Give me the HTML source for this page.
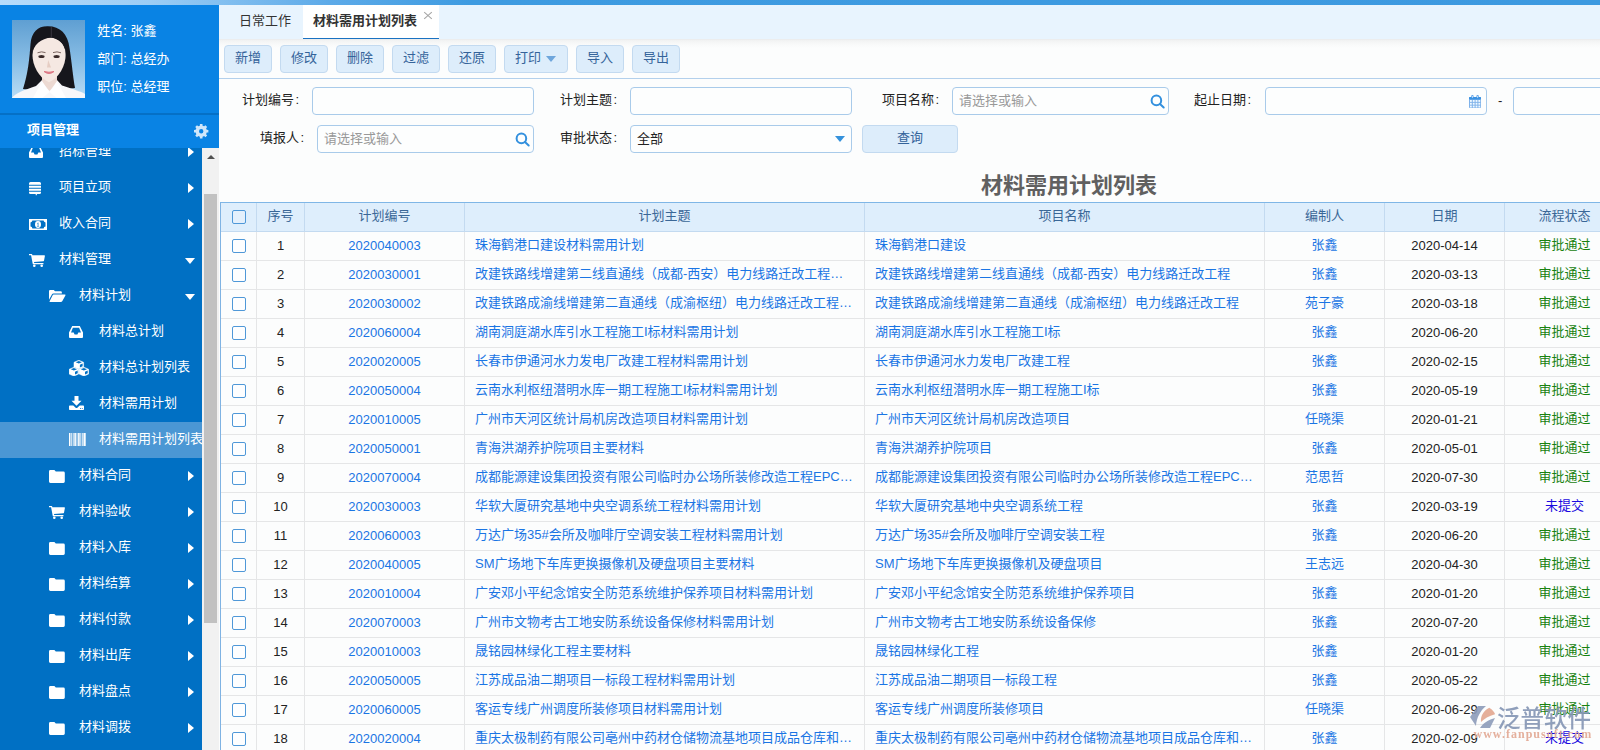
<!DOCTYPE html>
<html lang="zh-CN">
<head>
<meta charset="utf-8">
<title>材料需用计划列表</title>
<style>
*{box-sizing:border-box;margin:0;padding:0}
html,body{width:1600px;height:750px;overflow:hidden;background:#fcfdfd}
body{position:relative;font-family:"Liberation Sans","Noto Sans CJK SC",sans-serif;font-size:13px;color:#333;line-height:1}
.abs{position:absolute}
/* top strip */
#strip{position:absolute;left:0;top:0;width:1600px;height:5px;background:linear-gradient(90deg,#b7dcfb 0,#9ccdf5 150px,#5daae8 330px,#3e9be1 470px,#3c99e0 100%)}
/* sidebar */
#side{position:absolute;left:0;top:5px;width:219px;height:745px;background:#0983e4;overflow:hidden}
#side .info{position:absolute;left:97.300px;color:#fff;font-size:13px;line-height:16px;white-space:nowrap}
#divider{position:absolute;left:0;top:108px;width:219px;height:2px;background:#0570c6}
#modname{position:absolute;left:27px;top:117px;color:#fff;font-weight:bold;font-size:13px;line-height:16px}
#menu{position:absolute;left:0;top:143px;width:202px;height:602px;background:#0070c4;overflow:hidden}
#menu .it{position:absolute;left:0;width:202px;height:36px;color:#fff;font-size:13px;line-height:36px;white-space:nowrap}
#menu .it.on{background:#4b97d4}
#menu .it span{position:absolute;top:-1px}
#menu .it svg{position:absolute}
#sbar{position:absolute;left:202px;top:143px;width:17px;height:602px;background:#f1f1f1}
#sbar .thumb{position:absolute;left:2px;top:46px;width:13px;height:429px;background:#c1c1c1}
#sbar .up{position:absolute;left:5px;top:7px;width:0;height:0;border-left:4px solid transparent;border-right:4px solid transparent;border-bottom:4px solid #505050}
/* main */
#main{position:absolute;left:219px;top:5px;width:1381px;height:745px;overflow:hidden;background:#fcfdfd}
#tabs{position:absolute;left:0;top:0;width:1381px;height:34px;background:#e8f4fe}
#tabshadow{position:absolute;left:0;top:34px;width:1381px;height:9px;background:linear-gradient(180deg,#e9eaeb 0,#f1f2f2 14%,#f5f6f6 35%,#f9fafa 65%,#fcfdfd 100%)}
.tab{position:absolute;top:0;height:34px;line-height:32px;font-size:13px;color:#333;white-space:nowrap}
.tab.on{background:#fff;border-bottom:1px solid #1a72c2;font-weight:bold;color:#333}
.btn{position:absolute;top:40px;height:28px;border:1px solid #c3daf0;border-radius:4px;background:#ddedfb;color:#34639a;font-size:13px;line-height:24px;text-align:center;white-space:nowrap}
#tbline{position:absolute;left:0;top:73px;width:1381px;height:1px;background:#b3d0ec}
.lbl{position:absolute;font-size:13px;line-height:16px;color:#222;white-space:nowrap}
.lbl i{font-style:normal;margin-left:1.500px}
.inp{position:absolute;height:28px;border:1px solid #a9cbea;border-radius:4px;background:#fdfefe}
.ph{position:absolute;left:6px;top:5px;font-size:13px;line-height:16px;color:#999;white-space:nowrap}

#grid{position:absolute;left:1px;top:197px;width:1700px;height:560px;border-left:1px solid #7fb3e3}
.gh,.gr{position:absolute;left:0;width:1700px;height:29px}
.gh{top:0;height:30px;background:#deeefc;border-top:1px solid #7fb6e6;border-bottom:1px solid #c3daf0;color:#3a6797}
.gr{border-bottom:1px solid #e5e6e7;background:#fcfdfd;color:#222}
.c{position:absolute;top:0;height:100%;line-height:28px;text-align:center;white-space:nowrap;overflow:hidden;border-right:1px solid #e5e6e7;font-size:13px}
.gh .c{border-right:1px solid #c3daf0}
.c0{left:0;width:36px}.c1{left:36px;width:48px}.c2{left:84px;width:160px}.c3{left:244px;width:400px}.c4{left:644px;width:400px}.c5{left:1044px;width:120px}.c6{left:1164px;width:120px}.c7{left:1284px;width:120px}
.gr .c3,.gr .c4,.gr .c5,.gr .c7{line-height:26px}
.gh .c{line-height:25px}
.c.l{text-align:left;padding-left:10px}
.lk{color:#1a75e4}
.ok{color:#188210}.no{color:#1a0ae0}
.cb{position:absolute;left:11px;top:7px;width:14px;height:14px;border:1px solid #4f98d8;border-radius:2px;background:#fdfeff}
.gh .cb{background:#e4f0fc;top:7px}
#wm{position:absolute;left:1251px;top:700px;width:125px;height:45px;opacity:.9}
</style>
</head>
<body>
<div id="strip"></div>
<div id="side">
  <svg class="abs" style="left:12px;top:15px" width="73" height="78" viewBox="0 0 73 78">
<defs><linearGradient id="avbg" x1="0" y1="0" x2="0" y2="1"><stop offset="0" stop-color="#5f9fd2"/><stop offset=".55" stop-color="#8bbfe6"/><stop offset="1" stop-color="#b9dcf5"/></linearGradient>
<filter id="avbl" x="-10%" y="-10%" width="120%" height="120%"><feGaussianBlur stdDeviation=".75"/></filter>
<clipPath id="avcl"><rect width="73" height="78"/></clipPath></defs>
<rect width="73" height="78" fill="url(#avbg)"/>
<g clip-path="url(#avcl)" filter="url(#avbl)">
<path fill="#16151b" d="M36 6.300C26 6 19.500 12 18.500 24C17.500 38 16 54 11 69L34 72L63 68C61 57 60 44 57.500 28C56 14 48 6.300 36 6.300Z"/>
<path fill="#f7f7fa" d="M0 78C3 73.500 12 70 24 66L30 60H45L50 65.500C61 69 69 71.500 73 74V78Z"/>
<path fill="#ecd9d2" d="M30 52H45V63L37.500 71L30 63Z"/>
<path fill="#f5e8e2" d="M37.500 17.500C47 17.500 53.700 24 53.700 34C53.700 46 47 58 37 62.300C27 58 20.400 46 20.400 34C20.400 24 28 17.500 37.500 17.500Z"/>
<path fill="#16151b" d="M20 36C19.500 26 24 19 31 17L37 12L45 17C51 20 54.500 27 54 36C53.600 26 49.500 19.500 39.500 17.400C29 18.500 21 24 20 36Z"/>
<path d="M39.300 7V17" stroke="#4a4450" stroke-width=".7"/>
<path fill="#fefeff" d="M30 61L37.500 72L30.500 78H21Z M45 61L37.500 72L44.500 78H54Z"/>
<path d="M25.500 32.800Q29.500 31 33.500 32.600M41 32.600Q45 31 49 32.800" stroke="#7a6560" stroke-width="1" fill="none"/>
<ellipse cx="29.500" cy="36.600" rx="3.100" ry="1.500" fill="#3a2c2a"/><ellipse cx="44.600" cy="36.600" rx="3.100" ry="1.500" fill="#3a2c2a"/>
<path d="M36.200 40 35 47.500H39Z" fill="#e6cdc3"/>
<path d="M32 51.500Q37 55.500 42 51.500Q37 53 32 51.500Z" fill="#dc7784" stroke="#dc7784" stroke-width="1"/>
</g></svg>
  <div class="info" style="top:18px">姓名: 张鑫</div>
  <div class="info" style="top:46px">部门: 总经办</div>
  <div class="info" style="top:74px">职位: 总经理</div>
  <div id="divider"></div>
  <div id="modname">项目管理</div>
  <svg class="abs" style="left:194px;top:119px" width="15" height="15" viewBox="0 0 15 15"><path fill="#cfe6fa" fill-rule="evenodd" d="M12.73 5.83L14.39 5.94L14.39 8.46L12.73 8.57L12.08 10.14L13.17 11.40L11.40 13.17L10.14 12.08L8.57 12.73L8.46 14.39L5.94 14.39L5.83 12.73L4.26 12.08L3.00 13.17L1.23 11.40L2.32 10.14L1.67 8.57L0.01 8.46L0.01 5.94L1.67 5.83L2.32 4.26L1.23 3.00L3.00 1.23L4.26 2.32L5.83 1.67L5.94 0.01L8.46 0.01L8.57 1.67L10.14 2.32L11.40 1.23L13.17 3.00L12.08 4.26ZM5.00 7.20a2.20 2.20 0 1 0 4.40 0a2.20 2.20 0 1 0 -4.40 0Z"/></svg>
  <div id="menu">
  <div class="it" style="top:-14px"><svg style="left:29px;top:12px" width="14" height="12" viewBox="0 0 14 12" preserveAspectRatio="none"><path fill="#fff" fill-rule="evenodd" d="M3.2 0h7.6L14 6.6V11a1 1 0 0 1-1 1H1a1 1 0 0 1-1-1V6.6Z M3.9 1.7 2 6.6h2.7l.9 1.8h2.8l.9-1.8H12L10.1 1.7Z"/></svg><span style="left:59px">招标管理</span><svg style="left:188px;top:13px" width="6" height="10" viewBox="0 0 6 10" preserveAspectRatio="none"><path fill="#fff" d="M0 0 6 5 0 10Z"/></svg></div>
<div class="it" style="top:22px"><svg style="left:29px;top:12px" width="12" height="14" viewBox="0 0 12 14" preserveAspectRatio="none"><path fill="#fff" d="M1.5 0h9A1.5 1.5 0 0 1 12 1.5v1.3H0V1.5A1.5 1.5 0 0 1 1.5 0ZM0 3.8h12v2H0ZM0 6.8h12v2H0ZM0 9.8h12v.7A1.5 1.5 0 0 1 10.500 12H8.200L7 13.800 6.600 12H1.500A1.500 1.500 0 0 1 0 10.500Z"/></svg><span style="left:59px">项目立项</span><svg style="left:188px;top:13px" width="6" height="10" viewBox="0 0 6 10" preserveAspectRatio="none"><path fill="#fff" d="M0 0 6 5 0 10Z"/></svg></div>
<div class="it" style="top:58px"><svg style="left:29px;top:12.5px" width="18" height="11" viewBox="0 0 18 11" preserveAspectRatio="none"><path fill="#fff" fill-rule="evenodd" d="M0 0h18v11H0Z M3.400 1.500A2.200 2.200 0 0 1 1.500 3.400V7.600A2.200 2.200 0 0 1 3.400 9.500H14.600A2.200 2.200 0 0 1 16.500 7.600V3.400A2.200 2.200 0 0 1 14.600 1.500Z"/><ellipse cx="9" cy="5.500" rx="3" ry="3.400" fill="#fff"/><path d="M8.300 4.100 9.400 3.600V7H10.100V7.500H7.900V7H8.700V4.500L8.300 4.700Z" fill="#0070c4"/></svg><span style="left:59px">收入合同</span><svg style="left:188px;top:13px" width="6" height="10" viewBox="0 0 6 10" preserveAspectRatio="none"><path fill="#fff" d="M0 0 6 5 0 10Z"/></svg></div>
<div class="it" style="top:94px"><svg style="left:29px;top:12px" width="16" height="13" viewBox="0 0 16 13" preserveAspectRatio="none"><path fill="#fff" d="M0 0h2.600a.6.600 0 0 1 .6.500L3.400 1.300H15.300a.6.600 0 0 1 .6.700L15 6.700a.6.600 0 0 1-.5.500L5 8.100l.2 1H14a.6.600 0 0 1 0 1.200H4.300a.6.600 0 0 1-.6-.5L2.100 1.200H0Z"/><circle cx="5.300" cy="11.700" r="1.300" fill="#fff"/><circle cx="12.700" cy="11.700" r="1.300" fill="#fff"/></svg><span style="left:59px">材料管理</span><svg style="left:185px;top:16px" width="10" height="6" viewBox="0 0 10 6" preserveAspectRatio="none"><path fill="#fff" d="M0 0H10L5 6Z"/></svg></div>
<div class="it" style="top:130px"><svg style="left:49px;top:12px" width="16.6" height="12" viewBox="0 0 16 12" preserveAspectRatio="none"><path fill="#fff" d="M1.100 0H4.600L5.800 1.300H11.300A1.100 1.100 0 0 1 12.400 2.400V3.500H4.400A1.800 1.800 0 0 0 2.800 4.500L0 9.700V1.100A1.100 1.100 0 0 1 1.100 0Z"/><path fill="#fff" d="M4.500 4.600H15.300A.6.600 0 0 1 15.800 5.500L12.900 11A1.800 1.800 0 0 1 11.300 12H1A.5.500 0 0 1 .6 11.200L3.400 5.400A1.300 1.300 0 0 1 4.500 4.600Z"/></svg><span style="left:79px">材料计划</span><svg style="left:185px;top:16px" width="10" height="6" viewBox="0 0 10 6" preserveAspectRatio="none"><path fill="#fff" d="M0 0H10L5 6Z"/></svg></div>
<div class="it" style="top:166px"><svg style="left:69px;top:12px" width="14" height="12" viewBox="0 0 14 12" preserveAspectRatio="none"><path fill="#fff" fill-rule="evenodd" d="M3.2 0h7.6L14 6.6V11a1 1 0 0 1-1 1H1a1 1 0 0 1-1-1V6.6Z M3.9 1.7 2 6.6h2.7l.9 1.8h2.8l.9-1.8H12L10.1 1.7Z"/></svg><span style="left:99px">材料总计划</span></div>
<div class="it" style="top:202px"><svg style="left:69px;top:10px" width="20" height="16" viewBox="0 0 20 16" preserveAspectRatio="none"><path fill="#fff" stroke="#fff" stroke-width=".5" stroke-linejoin="round" d="M9.8 0.2l4.8 2.100v4.700l-4.8 2.100l-4.8-2.100v-4.700Z"/><path fill="#0070c4" d="M9.8 1.1l3.100 1.250l-3.100 1.250l-3.100-1.250Z"/><path fill="#0070c4" d="M10.9 4.8l2.700-1.200v2.700l-2.700 1.200Z"/><path fill="#fff" stroke="#fff" stroke-width=".5" stroke-linejoin="round" d="M4.9 7.2l4.8 2.100v4.700l-4.8 2.100l-4.8-2.100v-4.700Z"/><path fill="#0070c4" d="M4.9 8.1l3.100 1.250l-3.100 1.250l-3.100-1.250Z"/><path fill="#0070c4" d="M6.0 11.8l2.700-1.200v2.700l-2.700 1.200Z"/><path fill="#fff" stroke="#fff" stroke-width=".5" stroke-linejoin="round" d="M14.9 7.2l4.8 2.100v4.700l-4.8 2.100l-4.8-2.100v-4.700Z"/><path fill="#0070c4" d="M14.9 8.1l3.100 1.250l-3.100 1.250l-3.100-1.250Z"/><path fill="#0070c4" d="M16.0 11.8l2.700-1.200v2.700l-2.700 1.200Z"/></svg><span style="left:99px">材料总计划列表</span></div>
<div class="it" style="top:238px"><svg style="left:69px;top:10px" width="15" height="14" viewBox="0 0 15 14" preserveAspectRatio="none"><path fill="#fff" d="M5.500 0h4v4.800h3L7.500 9.800 2.500 4.800h3Z"/><path fill="#fff" fill-rule="evenodd" d="M.8 9.500H4.300L6.400 11.600A1.600 1.600 0 0 0 8.600 11.600L10.700 9.500H14.200A.8.800 0 0 1 15 10.300V13.200A.8.800 0 0 1 14.200 14H.8A.8.800 0 0 1 0 13.200V10.300A.8.800 0 0 1 .8 9.500ZM11 12.300h1v.8h-1ZM12.800 12.300h1v.8h-1Z"/></svg><span style="left:99px">材料需用计划</span></div>
<div class="it on" style="top:274px"><svg style="left:69px;top:11px" width="17" height="13" viewBox="0 0 17 13" preserveAspectRatio="none"><rect x="0" y="0" width="1.5" height="13" fill="#fff"/><rect x="2.3" y="0" width="0.8" height="13" fill="#fff"/><rect x="3.8" y="0" width="0.8" height="13" fill="#fff"/><rect x="5.3" y="0" width="1.6" height="13" fill="#fff"/><rect x="7.6" y="0" width="0.8" height="13" fill="#fff"/><rect x="9.1" y="0" width="1.6" height="13" fill="#fff"/><rect x="11.4" y="0" width="0.8" height="13" fill="#fff"/><rect x="12.9" y="0" width="0.8" height="13" fill="#fff"/><rect x="14.4" y="0" width="1.6" height="13" fill="#fff"/><rect x="16.3" y="0" width="0.7" height="13" fill="#fff"/></svg><span style="left:99px">材料需用计划列表</span></div>
<div class="it" style="top:310px"><svg style="left:49px;top:11.5px" width="16" height="13" viewBox="0 0 16 13" preserveAspectRatio="none"><path fill="#fff" d="M1.400 0H5.400L6.800 1.600H14.400A1.400 1.400 0 0 1 15.800 3V11.600A1.400 1.400 0 0 1 14.400 13H1.400A1.400 1.400 0 0 1 0 11.600V1.400A1.400 1.400 0 0 1 1.400 0Z"/></svg><span style="left:79px">材料合同</span><svg style="left:188px;top:13px" width="6" height="10" viewBox="0 0 6 10" preserveAspectRatio="none"><path fill="#fff" d="M0 0 6 5 0 10Z"/></svg></div>
<div class="it" style="top:346px"><svg style="left:49px;top:12px" width="16" height="13" viewBox="0 0 16 13" preserveAspectRatio="none"><path fill="#fff" d="M0 0h2.600a.6.600 0 0 1 .6.500L3.400 1.300H15.300a.6.600 0 0 1 .6.700L15 6.700a.6.600 0 0 1-.5.500L5 8.100l.2 1H14a.6.600 0 0 1 0 1.200H4.300a.6.600 0 0 1-.6-.5L2.100 1.200H0Z"/><circle cx="5.300" cy="11.700" r="1.300" fill="#fff"/><circle cx="12.700" cy="11.700" r="1.300" fill="#fff"/></svg><span style="left:79px">材料验收</span><svg style="left:188px;top:13px" width="6" height="10" viewBox="0 0 6 10" preserveAspectRatio="none"><path fill="#fff" d="M0 0 6 5 0 10Z"/></svg></div>
<div class="it" style="top:382px"><svg style="left:49px;top:11.5px" width="16" height="13" viewBox="0 0 16 13" preserveAspectRatio="none"><path fill="#fff" d="M1.400 0H5.400L6.800 1.600H14.400A1.400 1.400 0 0 1 15.800 3V11.600A1.400 1.400 0 0 1 14.400 13H1.400A1.400 1.400 0 0 1 0 11.600V1.400A1.400 1.400 0 0 1 1.400 0Z"/></svg><span style="left:79px">材料入库</span><svg style="left:188px;top:13px" width="6" height="10" viewBox="0 0 6 10" preserveAspectRatio="none"><path fill="#fff" d="M0 0 6 5 0 10Z"/></svg></div>
<div class="it" style="top:418px"><svg style="left:49px;top:11.5px" width="16" height="13" viewBox="0 0 16 13" preserveAspectRatio="none"><path fill="#fff" d="M1.400 0H5.400L6.800 1.600H14.400A1.400 1.400 0 0 1 15.800 3V11.600A1.400 1.400 0 0 1 14.400 13H1.400A1.400 1.400 0 0 1 0 11.600V1.400A1.400 1.400 0 0 1 1.400 0Z"/></svg><span style="left:79px">材料结算</span><svg style="left:188px;top:13px" width="6" height="10" viewBox="0 0 6 10" preserveAspectRatio="none"><path fill="#fff" d="M0 0 6 5 0 10Z"/></svg></div>
<div class="it" style="top:454px"><svg style="left:49px;top:11.5px" width="16" height="13" viewBox="0 0 16 13" preserveAspectRatio="none"><path fill="#fff" d="M1.400 0H5.400L6.800 1.600H14.400A1.400 1.400 0 0 1 15.800 3V11.600A1.400 1.400 0 0 1 14.400 13H1.400A1.400 1.400 0 0 1 0 11.600V1.400A1.400 1.400 0 0 1 1.400 0Z"/></svg><span style="left:79px">材料付款</span><svg style="left:188px;top:13px" width="6" height="10" viewBox="0 0 6 10" preserveAspectRatio="none"><path fill="#fff" d="M0 0 6 5 0 10Z"/></svg></div>
<div class="it" style="top:490px"><svg style="left:49px;top:11.5px" width="16" height="13" viewBox="0 0 16 13" preserveAspectRatio="none"><path fill="#fff" d="M1.400 0H5.400L6.800 1.600H14.400A1.400 1.400 0 0 1 15.800 3V11.600A1.400 1.400 0 0 1 14.400 13H1.400A1.400 1.400 0 0 1 0 11.600V1.400A1.400 1.400 0 0 1 1.400 0Z"/></svg><span style="left:79px">材料出库</span><svg style="left:188px;top:13px" width="6" height="10" viewBox="0 0 6 10" preserveAspectRatio="none"><path fill="#fff" d="M0 0 6 5 0 10Z"/></svg></div>
<div class="it" style="top:526px"><svg style="left:49px;top:11.5px" width="16" height="13" viewBox="0 0 16 13" preserveAspectRatio="none"><path fill="#fff" d="M1.400 0H5.400L6.800 1.600H14.400A1.400 1.400 0 0 1 15.800 3V11.600A1.400 1.400 0 0 1 14.400 13H1.400A1.400 1.400 0 0 1 0 11.600V1.400A1.400 1.400 0 0 1 1.400 0Z"/></svg><span style="left:79px">材料盘点</span><svg style="left:188px;top:13px" width="6" height="10" viewBox="0 0 6 10" preserveAspectRatio="none"><path fill="#fff" d="M0 0 6 5 0 10Z"/></svg></div>
<div class="it" style="top:562px"><svg style="left:49px;top:11.5px" width="16" height="13" viewBox="0 0 16 13" preserveAspectRatio="none"><path fill="#fff" d="M1.400 0H5.400L6.800 1.600H14.400A1.400 1.400 0 0 1 15.800 3V11.600A1.400 1.400 0 0 1 14.400 13H1.400A1.400 1.400 0 0 1 0 11.600V1.400A1.400 1.400 0 0 1 1.400 0Z"/></svg><span style="left:79px">材料调拨</span><svg style="left:188px;top:13px" width="6" height="10" viewBox="0 0 6 10" preserveAspectRatio="none"><path fill="#fff" d="M0 0 6 5 0 10Z"/></svg></div>
  </div>
  <div id="sbar"><div class="up"></div><div class="thumb"></div></div>
</div>
<div id="main">
  <div id="tabs">
    <div class="tab" style="left:20px">日常工作</div>
    <div class="tab on" style="left:84px;width:136px;padding-left:10px">材料需用计划列表</div>
    <svg class="abs" style="left:204px;top:6px" width="10" height="9" viewBox="0 0 10 9"><path d="M1.200 1.200 8.800 7.800M8.800 1.200 1.200 7.800" stroke="#a6a6a6" stroke-width="1.100" fill="none"/></svg>
  </div>
  <div id="tabshadow"></div>
  <div class="btn" style="left:5px;width:48px">新增</div>
  <div class="btn" style="left:61px;width:48px">修改</div>
  <div class="btn" style="left:117px;width:48px">删除</div>
  <div class="btn" style="left:173px;width:48px">过滤</div>
  <div class="btn" style="left:229px;width:48px">还原</div>
  <div class="btn" style="left:285px;width:64px;text-align:left;padding-left:10px">打印<svg class="abs" style="left:41px;top:10px" width="10" height="6" viewBox="0 0 10 6"><path d="M0 0H10L5 6Z" fill="#6ea6dc"/></svg></div>
  <div class="btn" style="left:357px;width:48px">导入</div>
  <div class="btn" style="left:413px;width:48px">导出</div>
  <div id="tbline"></div>
  <div class="lbl" style="left:23px;top:87px">计划编号<i>:</i></div>
<div class="inp" style="left:93px;top:82px;width:222px"></div>
<div class="lbl" style="left:341px;top:87px">计划主题<i>:</i></div>
<div class="inp" style="left:411px;top:82px;width:222px"></div>
<div class="lbl" style="left:663px;top:87px">项目名称<i>:</i></div>
<div class="inp" style="left:733px;top:82px;width:217px"><div class="ph">请选择或输入</div><svg class="abs" style="left:197px;top:6px" width="16" height="16" viewBox="0 0 16 16"><circle cx="6.400" cy="6.400" r="4.800" fill="none" stroke="#3390de" stroke-width="2"/><path d="M10 10 13.700 13.500" stroke="#3390de" stroke-width="2" stroke-linecap="round"/></svg></div>
<div class="lbl" style="left:975px;top:87px">起止日期<i>:</i></div>
<div class="inp" style="left:1046px;top:82px;width:222px"><svg class="abs" style="left:203.3px;top:6.9px" width="12" height="13" viewBox="0 0 12 13"><rect x="0" y="2" width="12" height="11" rx=".8" fill="#7fb2ea"/><rect x="0" y="2" width="12" height="2.400" rx=".8" fill="#3a92e2"/><rect x="2.300" y="0" width="2.200" height="3.600" rx="1" fill="#4a97e4"/><rect x="7.500" y="0" width="2.200" height="3.600" rx="1" fill="#4a97e4"/><rect x="2.950" y=".8" width=".9" height="2" fill="#cfe6fb"/><rect x="8.150" y=".8" width=".9" height="2" fill="#cfe6fb"/><g fill="#f0f9ff"><rect x="1" y="5" width="1.800" height="1.900"/><rect x="3.8" y="5" width="1.800" height="1.900"/><rect x="6.6" y="5" width="1.800" height="1.900"/><rect x="9.4" y="5" width="1.800" height="1.900"/><rect x="1" y="7.8" width="1.800" height="1.900"/><rect x="3.8" y="7.8" width="1.800" height="1.900"/><rect x="6.6" y="7.8" width="1.800" height="1.900"/><rect x="9.4" y="7.8" width="1.800" height="1.900"/><rect x="1" y="10.6" width="1.800" height="1.900"/><rect x="3.8" y="10.6" width="1.800" height="1.900"/><rect x="6.6" y="10.6" width="1.800" height="1.900"/><rect x="9.4" y="10.6" width="1.800" height="1.900"/></g></svg></div>
<div class="lbl" style="left:1279px;top:88px">-</div>
<div class="inp" style="left:1294px;top:82px;width:222px"></div>
<div class="lbl" style="left:41px;top:125px">填报人<i>:</i></div>
<div class="inp" style="left:98px;top:120px;width:217px"><div class="ph">请选择或输入</div><svg class="abs" style="left:197px;top:6px" width="16" height="16" viewBox="0 0 16 16"><circle cx="6.400" cy="6.400" r="4.800" fill="none" stroke="#3390de" stroke-width="2"/><path d="M10 10 13.700 13.500" stroke="#3390de" stroke-width="2" stroke-linecap="round"/></svg></div>
<div class="lbl" style="left:341px;top:125px">审批状态<i>:</i></div>
<div class="inp" style="left:411px;top:120px;width:222px"><div class="ph" style="color:#222">全部</div><svg class="abs" style="left:204px;top:10px" width="10" height="6" viewBox="0 0 10 6"><path d="M0 0H10L5 6Z" fill="#3592dc"/></svg></div>
<div class="btn" style="left:643px;top:120px;width:96px;height:28px">查询</div>
<div class="abs" style="left:1px;top:167px;width:1698px;text-align:center;font-size:22px;line-height:28px;font-weight:bold;color:#606060">材料需用计划列表</div>
  <div id="grid">
<div class="gh"><div class="c c0"><i class="cb"></i></div><div class="c c1">序号</div><div class="c c2">计划编号</div><div class="c c3">计划主题</div><div class="c c4">项目名称</div><div class="c c5">编制人</div><div class="c c6">日期</div><div class="c c7">流程状态</div></div>
<div class="gr" style="top:30px"><div class="c c0"><i class="cb"></i></div><div class="c c1">1</div><div class="c c2 lk">2020040003</div><div class="c c3 lk l">珠海鹤港口建设材料需用计划</div><div class="c c4 lk l">珠海鹤港口建设</div><div class="c c5 lk">张鑫</div><div class="c c6">2020-04-14</div><div class="c c7"><span class="ok">审批通过</span></div></div>
<div class="gr" style="top:59px"><div class="c c0"><i class="cb"></i></div><div class="c c1">2</div><div class="c c2 lk">2020030001</div><div class="c c3 lk l">改建铁路线增建第二线直通线（成都-西安）电力线路迁改工程…</div><div class="c c4 lk l">改建铁路线增建第二线直通线（成都-西安）电力线路迁改工程</div><div class="c c5 lk">张鑫</div><div class="c c6">2020-03-13</div><div class="c c7"><span class="ok">审批通过</span></div></div>
<div class="gr" style="top:88px"><div class="c c0"><i class="cb"></i></div><div class="c c1">3</div><div class="c c2 lk">2020030002</div><div class="c c3 lk l">改建铁路成渝线增建第二直通线（成渝枢纽）电力线路迁改工程…</div><div class="c c4 lk l">改建铁路成渝线增建第二直通线（成渝枢纽）电力线路迁改工程</div><div class="c c5 lk">苑子豪</div><div class="c c6">2020-03-18</div><div class="c c7"><span class="ok">审批通过</span></div></div>
<div class="gr" style="top:117px"><div class="c c0"><i class="cb"></i></div><div class="c c1">4</div><div class="c c2 lk">2020060004</div><div class="c c3 lk l">湖南洞庭湖水库引水工程施工I标材料需用计划</div><div class="c c4 lk l">湖南洞庭湖水库引水工程施工I标</div><div class="c c5 lk">张鑫</div><div class="c c6">2020-06-20</div><div class="c c7"><span class="ok">审批通过</span></div></div>
<div class="gr" style="top:146px"><div class="c c0"><i class="cb"></i></div><div class="c c1">5</div><div class="c c2 lk">2020020005</div><div class="c c3 lk l">长春市伊通河水力发电厂改建工程材料需用计划</div><div class="c c4 lk l">长春市伊通河水力发电厂改建工程</div><div class="c c5 lk">张鑫</div><div class="c c6">2020-02-15</div><div class="c c7"><span class="ok">审批通过</span></div></div>
<div class="gr" style="top:175px"><div class="c c0"><i class="cb"></i></div><div class="c c1">6</div><div class="c c2 lk">2020050004</div><div class="c c3 lk l">云南水利枢纽潜明水库一期工程施工I标材料需用计划</div><div class="c c4 lk l">云南水利枢纽潜明水库一期工程施工I标</div><div class="c c5 lk">张鑫</div><div class="c c6">2020-05-19</div><div class="c c7"><span class="ok">审批通过</span></div></div>
<div class="gr" style="top:204px"><div class="c c0"><i class="cb"></i></div><div class="c c1">7</div><div class="c c2 lk">2020010005</div><div class="c c3 lk l">广州市天河区统计局机房改造项目材料需用计划</div><div class="c c4 lk l">广州市天河区统计局机房改造项目</div><div class="c c5 lk">任晓渠</div><div class="c c6">2020-01-21</div><div class="c c7"><span class="ok">审批通过</span></div></div>
<div class="gr" style="top:233px"><div class="c c0"><i class="cb"></i></div><div class="c c1">8</div><div class="c c2 lk">2020050001</div><div class="c c3 lk l">青海洪湖养护院项目主要材料</div><div class="c c4 lk l">青海洪湖养护院项目</div><div class="c c5 lk">张鑫</div><div class="c c6">2020-05-01</div><div class="c c7"><span class="ok">审批通过</span></div></div>
<div class="gr" style="top:262px"><div class="c c0"><i class="cb"></i></div><div class="c c1">9</div><div class="c c2 lk">2020070004</div><div class="c c3 lk l">成都能源建设集团投资有限公司临时办公场所装修改造工程EPC…</div><div class="c c4 lk l">成都能源建设集团投资有限公司临时办公场所装修改造工程EPC…</div><div class="c c5 lk">范思哲</div><div class="c c6">2020-07-30</div><div class="c c7"><span class="ok">审批通过</span></div></div>
<div class="gr" style="top:291px"><div class="c c0"><i class="cb"></i></div><div class="c c1">10</div><div class="c c2 lk">2020030003</div><div class="c c3 lk l">华软大厦研究基地中央空调系统工程材料需用计划</div><div class="c c4 lk l">华软大厦研究基地中央空调系统工程</div><div class="c c5 lk">张鑫</div><div class="c c6">2020-03-19</div><div class="c c7"><span class="no">未提交</span></div></div>
<div class="gr" style="top:320px"><div class="c c0"><i class="cb"></i></div><div class="c c1">11</div><div class="c c2 lk">2020060003</div><div class="c c3 lk l">万达广场35#会所及咖啡厅空调安装工程材料需用计划</div><div class="c c4 lk l">万达广场35#会所及咖啡厅空调安装工程</div><div class="c c5 lk">张鑫</div><div class="c c6">2020-06-20</div><div class="c c7"><span class="ok">审批通过</span></div></div>
<div class="gr" style="top:349px"><div class="c c0"><i class="cb"></i></div><div class="c c1">12</div><div class="c c2 lk">2020040005</div><div class="c c3 lk l">SM广场地下车库更换摄像机及硬盘项目主要材料</div><div class="c c4 lk l">SM广场地下车库更换摄像机及硬盘项目</div><div class="c c5 lk">王志远</div><div class="c c6">2020-04-30</div><div class="c c7"><span class="ok">审批通过</span></div></div>
<div class="gr" style="top:378px"><div class="c c0"><i class="cb"></i></div><div class="c c1">13</div><div class="c c2 lk">2020010004</div><div class="c c3 lk l">广安邓小平纪念馆安全防范系统维护保养项目材料需用计划</div><div class="c c4 lk l">广安邓小平纪念馆安全防范系统维护保养项目</div><div class="c c5 lk">张鑫</div><div class="c c6">2020-01-20</div><div class="c c7"><span class="ok">审批通过</span></div></div>
<div class="gr" style="top:407px"><div class="c c0"><i class="cb"></i></div><div class="c c1">14</div><div class="c c2 lk">2020070003</div><div class="c c3 lk l">广州市文物考古工地安防系统设备保修材料需用计划</div><div class="c c4 lk l">广州市文物考古工地安防系统设备保修</div><div class="c c5 lk">张鑫</div><div class="c c6">2020-07-20</div><div class="c c7"><span class="ok">审批通过</span></div></div>
<div class="gr" style="top:436px"><div class="c c0"><i class="cb"></i></div><div class="c c1">15</div><div class="c c2 lk">2020010003</div><div class="c c3 lk l">晟铭园林绿化工程主要材料</div><div class="c c4 lk l">晟铭园林绿化工程</div><div class="c c5 lk">张鑫</div><div class="c c6">2020-01-20</div><div class="c c7"><span class="ok">审批通过</span></div></div>
<div class="gr" style="top:465px"><div class="c c0"><i class="cb"></i></div><div class="c c1">16</div><div class="c c2 lk">2020050005</div><div class="c c3 lk l">江苏成品油二期项目一标段工程材料需用计划</div><div class="c c4 lk l">江苏成品油二期项目一标段工程</div><div class="c c5 lk">张鑫</div><div class="c c6">2020-05-22</div><div class="c c7"><span class="ok">审批通过</span></div></div>
<div class="gr" style="top:494px"><div class="c c0"><i class="cb"></i></div><div class="c c1">17</div><div class="c c2 lk">2020060005</div><div class="c c3 lk l">客运专线广州调度所装修项目材料需用计划</div><div class="c c4 lk l">客运专线广州调度所装修项目</div><div class="c c5 lk">任晓渠</div><div class="c c6">2020-06-29</div><div class="c c7"><span class="ok">审批通过</span></div></div>
<div class="gr" style="top:523px"><div class="c c0"><i class="cb"></i></div><div class="c c1">18</div><div class="c c2 lk">2020020004</div><div class="c c3 lk l">重庆太极制药有限公司亳州中药材仓储物流基地项目成品仓库和…</div><div class="c c4 lk l">重庆太极制药有限公司亳州中药材仓储物流基地项目成品仓库和…</div><div class="c c5 lk">张鑫</div><div class="c c6">2020-02-09</div><div class="c c7"><span class="no">未提交</span></div></div>
</div>
  <div id="wm">
<svg class="abs" style="left:0;top:1px" width="26" height="23" viewBox="0 0 26 23"><path fill="#8d9cba" d="M8 0H16C10 5 6.500 12 6 20L0 11Z"/><path fill="#e3a790" d="M19.300 1.700C23 4 25 7 25 8.300C19 10 14 13 11 16C10.500 10 13 5 19.300 1.700Z"/><path fill="#8d9cba" d="M25 12C19 13.500 13 17 10 22H20Z"/></svg>
<div class="abs" style="left:27px;top:-2.500px;font-size:23.500px;line-height:32px;color:#8495b4;white-space:nowrap;font-weight:500">泛普软件</div>
<div class="abs" style="left:3.500px;top:20.500px;font-family:'Liberation Serif',serif;font-weight:bold;font-size:12px;line-height:16px;letter-spacing:1.020px;color:#e2a893;white-space:nowrap">www.fanpusoft.com</div>
</div>
</div>
</body>
</html>
